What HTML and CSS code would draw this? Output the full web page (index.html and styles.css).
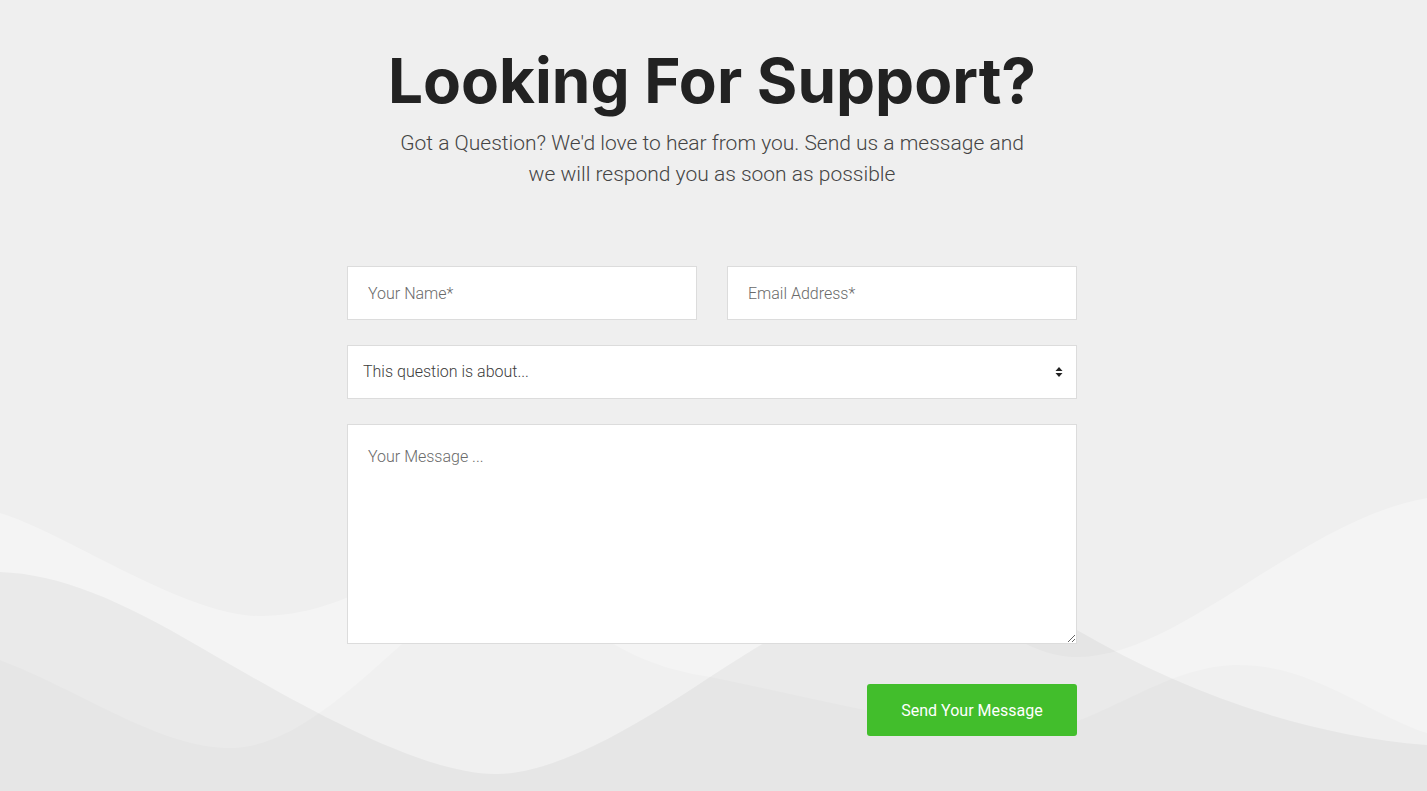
FILE: index.html
```html
<!DOCTYPE html>
<html lang="en">
<head>
<meta charset="utf-8">
<title>Looking For Support?</title>
<link rel="stylesheet" href="styles.css">
</head>
<body>
<div class="page">
  <svg class="waves" width="1427" height="791" viewBox="0 0 1427 791" preserveAspectRatio="none" aria-hidden="true">
    <path class="wave-light" d="M0,513 C60,530 185,616 259,616 C420,616 520,430 680,430 C850,430 960,657 1077,657 C1180,657 1300,520 1427,498 L1427,791 L0,791 Z"/>
    <path class="wave-soft" d="M0,660 C80,690 160,748 230,748 C290,748 350,690 403,643 C450,600 480,580 510,580 C550,580 580,620 612,643 C650,665 680,672 711,677 C800,695 900,720 996,733 C1080,745 1150,668 1233,665 C1310,662 1370,715 1427,733 L1427,791 L0,791 Z"/>
    <path class="wave-dark" d="M0,572 C60,574 120,600 200,647 C300,705 420,774 496,774 C580,774 700,680 764,643 C820,610 860,570 920,570 C990,570 1030,605 1077,630 C1180,690 1300,735 1427,745 L1427,791 L0,791 Z"/>
  </svg>

  <main class="support">
    <h1 class="support__title">Looking For Support?</h1>
    <p class="support__lead">Got a Question? We'd love to hear from you. Send us a message and<br>we will respond you as soon as possible</p>

    <form class="contact">
      <div class="contact__row">
        <input class="field" type="text" placeholder="Your Name*">
        <input class="field" type="email" placeholder="Email Address*">
      </div>
      <div class="select-wrap">
        <select class="field field--select">
          <option>This question is about...</option>
        </select>
        <svg class="select-wrap__arrows" width="8" height="10" viewBox="0 0 8 10" aria-hidden="true">
          <path d="M4 0 L7.5 4 L0.5 4 Z M0.5 6 L7.5 6 L4 10 Z" fill="#222"/>
        </svg>
      </div>
      <textarea class="field field--area" placeholder="Your Message ..."></textarea>
      <div class="contact__actions">
        <button class="btn" type="button">Send Your Message</button>
      </div>
    </form>
  </main>
</div>
</body>
</html>
```

FILE: styles.css
```css
html, body {
  margin: 0;
  padding: 0;
}

body {
  background: #efefef;
  font-family: Roboto, "Liberation Sans", Arial, sans-serif;
  color: #333;
}

.page {
  position: relative;
  min-height: 791px;
  overflow: hidden;
}

.waves {
  position: absolute;
  left: 0;
  top: 0;
  width: 100%;
  height: 791px;
  z-index: 0;
}

.wave-light { fill: rgba(255, 255, 255, 0.31); }
.wave-soft  { fill: rgba(0, 0, 0, 0.015); }
.wave-dark  { fill: rgba(0, 0, 0, 0.04); }

.support {
  position: relative;
  z-index: 1;
  width: 730px;
  padding: 42px 3px 0 0;
  margin: 0 auto;
  text-align: center;
}

.support__title {
  margin: 0;
  font-family: Inter, "Open Sans", sans-serif;
  font-weight: 700;
  font-size: 62px;
  line-height: 77px;
  color: #222;
  white-space: nowrap;
}

.support__lead {
  margin: 9px 0 0;
  font-family: Roboto, sans-serif;
  font-weight: 300;
  font-size: 21px;
  line-height: 31px;
  color: #444;
  white-space: nowrap;
}

.contact {
  margin-top: 76px;
  display: flex;
  flex-direction: column;
  gap: 25px;
  text-align: left;
}

.contact__row {
  display: grid;
  grid-template-columns: 1fr 1fr;
  gap: 30px;
}

.field {
  box-sizing: border-box;
  width: 100%;
  height: 54px;
  margin: 0;
  padding: 0 20px;
  border: 1px solid #dcdcdc;
  border-radius: 0;
  background: #fff;
  font-family: Roboto, sans-serif;
  font-weight: 300;
  font-size: 16px;
  color: #444;
  outline: none;
}

.field::placeholder {
  color: #6a6a6a;
  opacity: 1;
}

.select-wrap {
  position: relative;
}

.field--select {
  appearance: none;
  -webkit-appearance: none;
  padding: 0 15px 1px;
  color: #3c3c3c;
}

.select-wrap__arrows {
  position: absolute;
  right: 14px;
  top: 22px;
  pointer-events: none;
}

.field--area {
  height: 220px;
  padding: 22px 20px 20px;
  line-height: 19px;
  resize: both;
  display: block;
}

.contact__actions {
  display: flex;
  justify-content: flex-end;
  margin-top: 15px;
}

.btn {
  width: 210px;
  height: 52px;
  border: 0;
  border-radius: 3px;
  background: #42be2c;
  color: #fff;
  font-family: Roboto, sans-serif;
  font-weight: 400;
  font-size: 16px;
  cursor: pointer;
}
```
